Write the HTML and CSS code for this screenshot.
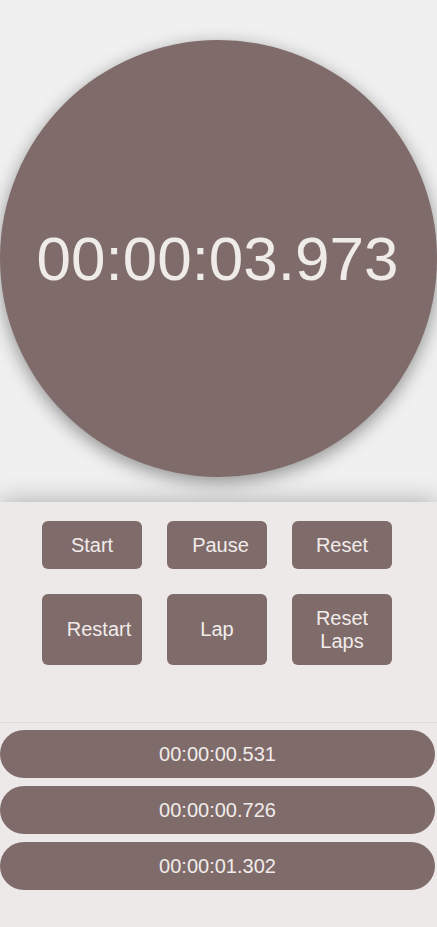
FILE: index.html
```html
<!DOCTYPE html>
<html lang="en">
<head>
<meta charset="utf-8">
<title>Stopwatch</title>
<link rel="stylesheet" href="styles.css">
</head>
<body>
  <section class="display">
    <div class="dial">
      <span class="time">00:00:03.973</span>
    </div>
  </section>
  <section class="panel">
    <div class="controls">
      <button class="btn">Start</button>
      <button class="btn shift-s">Pause</button>
      <button class="btn">Reset</button>
      <button class="btn tall shift-m">Restart</button>
      <button class="btn tall">Lap</button>
      <button class="btn tall">Reset<br>Laps</button>
    </div>
    <hr class="divider">
    <ul class="laps">
      <li class="lap">00:00:00.531</li>
      <li class="lap">00:00:00.726</li>
      <li class="lap">00:00:01.302</li>
    </ul>
  </section>
</body>
</html>
```

FILE: styles.css
```css
html, body {
  margin: 0;
  padding: 0;
  background: #ede9e8;
  font-family: "Liberation Sans", Arial, sans-serif;
}

.display {
  background: #f0f0f0;
  padding-top: 40px;
  height: 462px;
}

.dial {
  width: 437px;
  height: 437px;
  border-radius: 50%;
  background: #7f6b6a;
  box-shadow: 0 5px 18px rgba(0, 0, 0, 0.4);
  display: flex;
  align-items: center;
  justify-content: center;
}

.time {
  color: #efebe9;
  font-size: 62px;
  line-height: 1;
  margin-right: 2px;
}

.panel {
  position: relative;
  background: #ede9e8;
  box-shadow: 0 0 24px rgba(0, 0, 0, 0.3);
  padding-top: 19px;
  min-height: 406px;
}

.controls {
  display: grid;
  grid-template-columns: repeat(3, 100px);
  column-gap: 25px;
  row-gap: 25px;
  justify-content: center;
  margin-right: 3px;
}

.btn {
  height: 48px;
  border: none;
  border-radius: 6px;
  background: #7f6b6a;
  color: #f1ecea;
  font-family: "Liberation Sans", Arial, sans-serif;
  font-size: 20px;
  line-height: 23px;
  padding: 0;
}

.btn.tall {
  height: 71px;
}

.shift-s {
  padding-left: 7px;
}

.shift-m {
  padding-left: 14px;
}

.divider {
  border: none;
  border-top: 1px solid #dcdcdc;
  margin: 57px 0 0 0;
  height: 0;
}

.laps {
  list-style: none;
  margin: 7px 0 0 0;
  padding: 0;
  display: flex;
  flex-direction: column;
  gap: 8px;
}

.lap {
  width: 435px;
  height: 48px;
  border-radius: 24px;
  background: #7f6b6a;
  color: #f1ecea;
  font-size: 20px;
  display: flex;
  align-items: center;
  justify-content: center;
}
```
